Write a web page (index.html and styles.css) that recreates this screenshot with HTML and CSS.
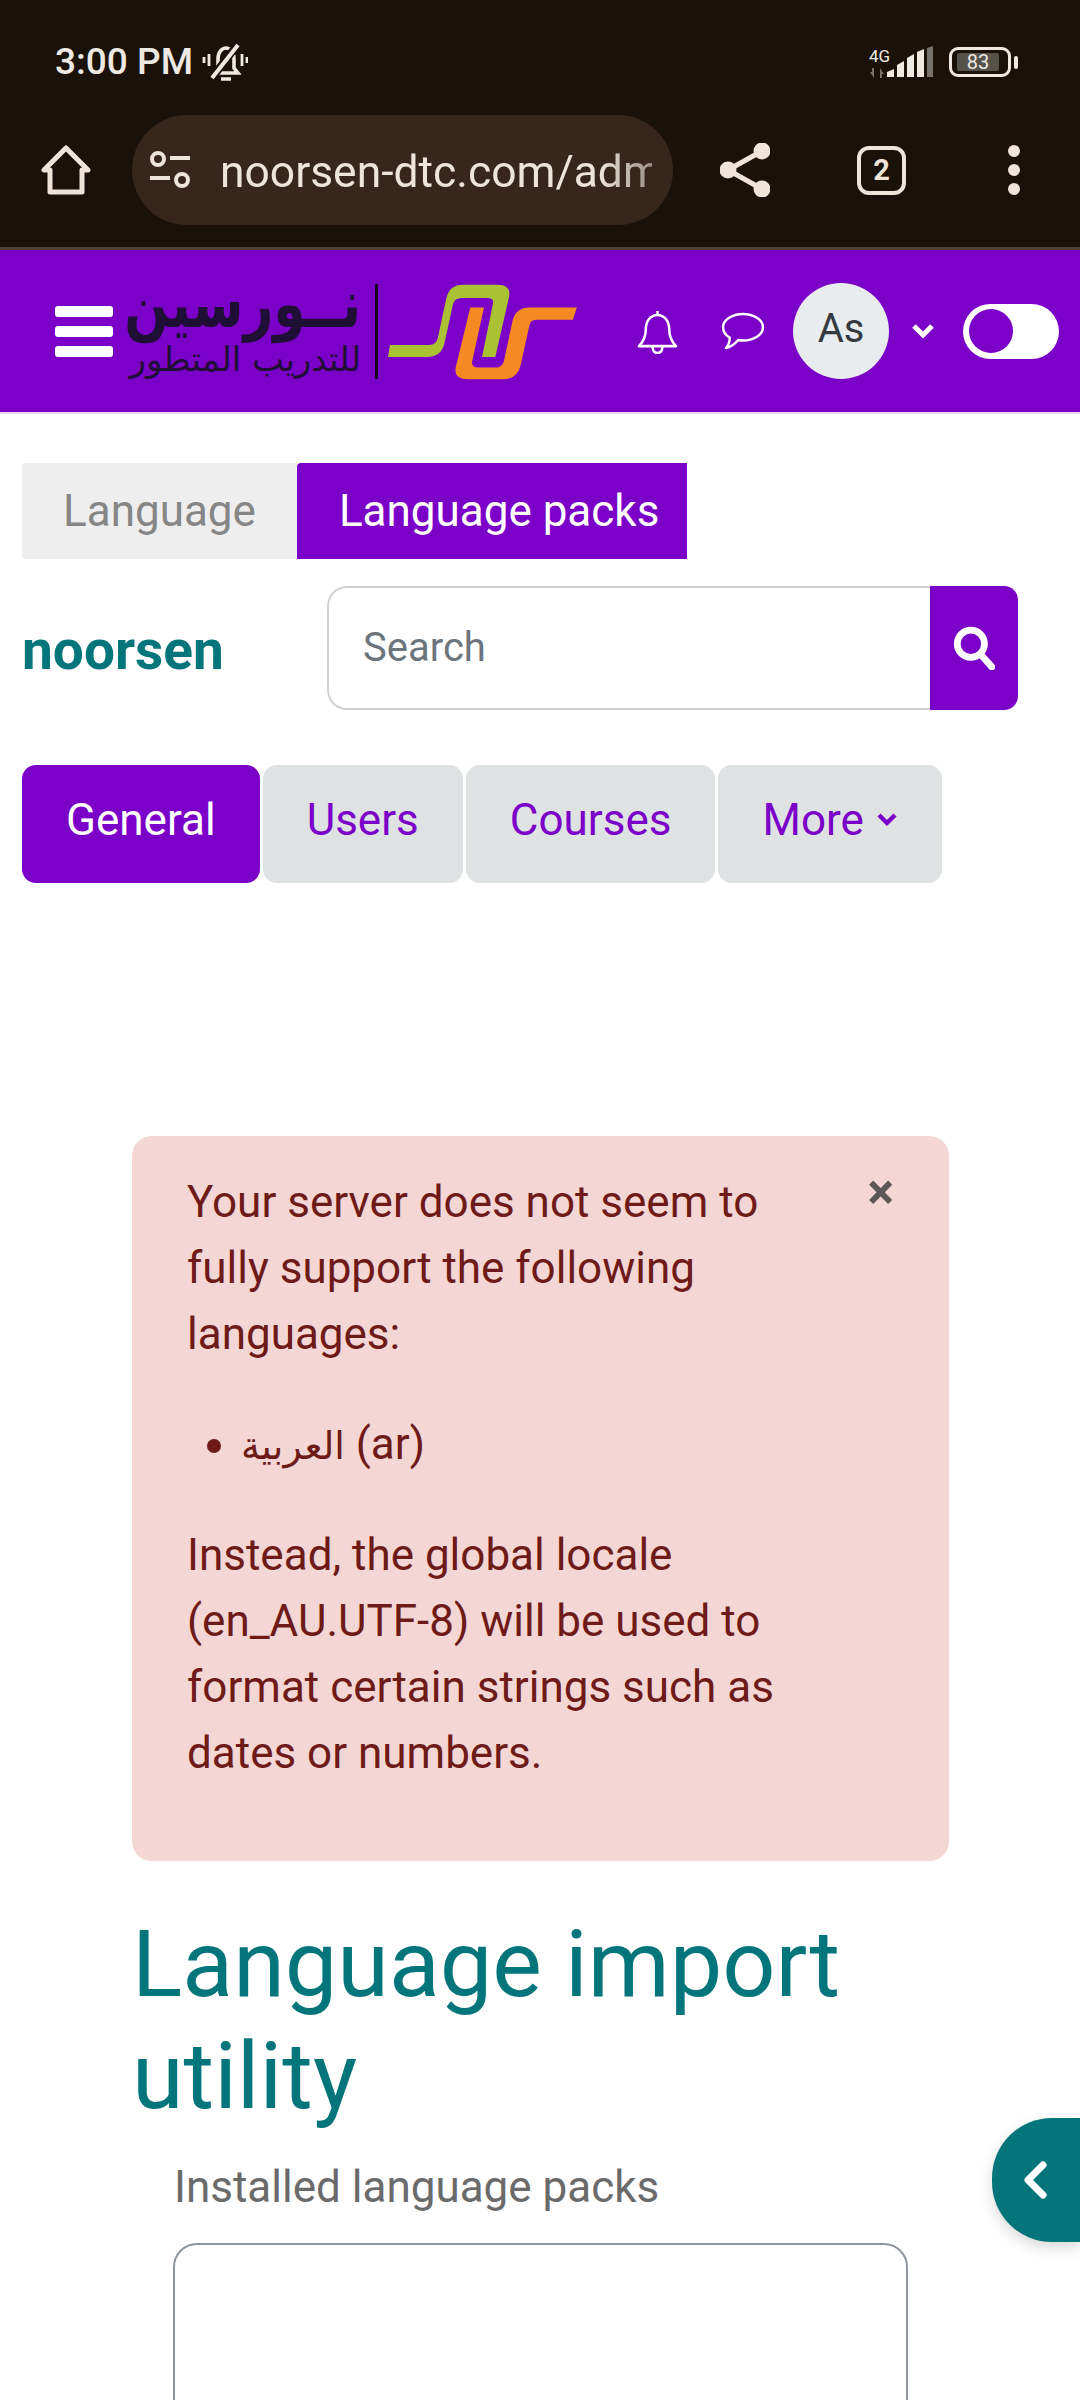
FILE: index.html

```html
<!DOCTYPE html>
<html lang="en">
<head>
  <meta charset="UTF-8">
  <title>Language import utility</title>
  <link rel="stylesheet" href="styles.css">
</head>
<body>
  <div class="browser">
    <div class="status-bar">
      <span class="clock">3:00 PM</span>
      <svg class="mute" viewBox="0 0 46 40" fill="none" stroke="#eee9e2" stroke-width="3.6">
        <path d="M12 31l4-5v-9c0-7 4-11 8-11s8 4 8 11v9l4 5z"/>
        <path d="M19 37h10" stroke-width="3.5"/>
        <path d="M9 37L36 2" stroke="#1a1108" stroke-width="8"/>
        <path d="M10 36L36 3" stroke-width="4"/>
        <path d="M7 12v12M2 15v6M40 12v12M45 15v6" stroke-width="2.8"/>
      </svg>
      <span class="status-right">
        <span class="net">
          <span class="net-label">4G</span>
          <svg class="arrows" viewBox="0 0 16 10" fill="#77726b"><path d="M1 4h2V0h2v10zM11 10V0l4 6h-2v4z"/></svg>
        </span>
        <svg class="signal" viewBox="0 0 48 32" fill="#eee9e2">
          <path d="M0 31v-5l7-3v8zM10 31V19l7-4v16zM20 31V12l7-4v23zM30 31V6l7-3v28z"/>
          <path d="M40 31V2l6-2v31z" fill="#77726b"/>
        </svg>
        <span class="battery"><span class="battery-level">83</span></span>
        <span class="battery-cap"></span>
      </span>
    </div>
    <div class="toolbar">
      <svg class="home" viewBox="0 0 50 50" fill="none" stroke="#eee4d8" stroke-width="5" stroke-linejoin="round">
        <path d="M25 3L3 25h6v22h32V25h6z"/>
      </svg>
      <div class="url-pill">
        <svg class="tune" viewBox="0 0 42 40" fill="none" stroke="#eee4d8" stroke-width="4">
          <circle cx="9" cy="9" r="6"/>
          <circle cx="33" cy="30" r="6"/>
          <path d="M21 8h20M1 28h20"/>
        </svg>
        <span class="url">noorsen-dtc.com/adm</span>
      </div>
      <svg class="share" viewBox="0 0 50 54" fill="#eee4d8" stroke="#eee4d8" stroke-width="5">
        <circle cx="42" cy="8" r="6"/>
        <circle cx="42" cy="46" r="6"/>
        <circle cx="8" cy="27" r="6"/>
        <path d="M42 8L8 27l34 19" fill="none"/>
      </svg>
      <span class="tab-count">2</span>
      <span class="dots"><i></i><i></i><i></i></span>
    </div>
  </div>

  <header class="navbar">
    <span class="burger"><i></i><i></i><i></i></span>
    <div class="logo-text" lang="ar" dir="rtl">
      <span class="logo-name">نــورسين</span>
      <span class="logo-sub">للتدريب المتطور</span>
    </div>
    <span class="logo-rule"></span>
    <svg class="logo-mark" viewBox="980 125 485 290" preserveAspectRatio="none">
      <path fill="#aac134" d="M985 310h100q18 0 22-20l22-120q8-40 42-40h88q36 0 30 36l-35 180h-34l28-160q3-16-14-16h-66q-18 0-22 18l-22 118q-8 40-44 40H980z"/>
      <path fill="#f58a22" d="M1190 198h35l-30 160q-3 20 14 20h46q16 0 21-20l22-120q8-40 44-40h120l-10 37h-92q-16 0-19 16l-22 118q-8 44-46 44h-88q-38 0-32-36z"/>
    </svg>
    <svg class="bell" viewBox="0 0 42 46" fill="none" stroke="#fff" stroke-width="2.6" stroke-linejoin="round">
      <path d="M2 38c4-4 7-9 7-17 0-9 5-15 12-15s12 6 12 15c0 8 3 13 7 17z"/>
      <path d="M21 2v4M16 39c0 8 10 8 10 0"/>
    </svg>
    <svg class="chat" viewBox="0 0 46 40" fill="none" stroke="#fff" stroke-width="2.6" stroke-linejoin="round">
      <path d="M23 2c11 0 21 6 21 14s-10 14-21 14c-2 0-3 0-5-.5C15 33 10 37 5 38c3-3 4-6 4-11C4 24 2 20 2 16 2 8 12 2 23 2z"/>
    </svg>
    <span class="avatar">As</span>
    <svg class="nav-caret" viewBox="0 0 24 18" fill="none" stroke="#fff" stroke-width="5"><path d="M3 4l9 9 9-9"/></svg>
    <span class="toggle"><span class="toggle-knob"></span></span>
  </header>

  <nav class="top-tabs">
    <a class="top-tab">Language</a>
    <a class="top-tab top-tab-active">Language packs</a>
  </nav>

  <div class="site-row">
    <span class="site-name">noorsen</span>
    <form class="search">
      <span class="search-input">Search</span>
      <span class="search-btn">
        <svg viewBox="0 0 40 42" fill="none" stroke="#fff" stroke-width="6.5" stroke-linecap="round">
          <circle cx="17" cy="17" r="13"/>
          <path d="M27 28l10 11"/>
        </svg>
      </span>
    </form>
  </div>

  <nav class="pills">
    <a class="pill pill-active">General</a>
    <a class="pill">Users</a>
    <a class="pill">Courses</a>
    <a class="pill">More
      <svg class="more-caret" viewBox="0 0 20 16" fill="none" stroke="#7b00c8" stroke-width="4.4"><path d="M2 3l8 8 8-8"/></svg>
    </a>
  </nav>

  <main class="content">
    <div class="alert">
      <span class="alert-close">×</span>
      <p>Your server does not seem to fully support the following languages:</p>
      <ul>
        <li><span lang="ar" class="ar">العربية</span> (ar)</li>
      </ul>
      <p>Instead, the global locale (en_AU.UTF-8) will be used to format certain strings such as dates or numbers.</p>
    </div>
    <h1>Language import utility</h1>
    <label class="packs-label">Installed language packs</label>
    <div class="packs-box"></div>
  </main>

  <a class="drawer-btn">
    <svg viewBox="0 0 26 38" fill="none" stroke="#fff" stroke-width="7" stroke-linejoin="round" stroke-linecap="round"><path d="M21 4L6 19l15 15"/></svg>
  </a>
</body>
</html>
```

FILE: styles.css

```css
html, body {
  margin: 0;
  padding: 0;
}

body {
  position: relative;
  width: 1080px;
  height: 2400px;
  overflow: hidden;
  background-color: white;
  font-family: Roboto, "Liberation Sans", sans-serif;
}

/* browser chrome */
.browser {
  height: 247px;
  background-color: #1a1108;
  border-bottom: 3px solid #4a4336;
}

.status-bar {
  display: flex;
  align-items: center;
  height: 60px;
  padding: 32px 62px 0 55px;
  color: #eee9e2;
}

.clock {
  font-size: 37px;
  font-weight: 500;
  line-height: 60px;
}

.mute {
  width: 46px;
  height: 40px;
  margin-left: 9px;
}

.status-right {
  display: flex;
  align-items: center;
  margin-left: auto;
}

.net {
  display: flex;
  flex-direction: column;
  width: 30px;
  margin-right: -12px;
}

.net-label {
  font-size: 17px;
  line-height: 20px;
}

.arrows {
  width: 16px;
  height: 10px;
  margin-top: 2px;
}

.signal {
  width: 48px;
  height: 32px;
}

.battery {
  display: flex;
  align-items: center;
  box-sizing: border-box;
  width: 62px;
  height: 30px;
  margin-left: 14px;
  padding: 4px;
  border: 3px solid #eee9e2;
  border-radius: 9px;
}

.battery-level {
  width: 42px;
  height: 18px;
  margin-left: 1px;
  background-color: #55514b;
  border-radius: 2px;
  color: #eee9e2;
  font-size: 20px;
  line-height: 18px;
  text-align: center;
}

.battery-cap {
  width: 4px;
  height: 13px;
  margin-left: 3px;
  background-color: #eee9e2;
  border-radius: 2px;
}

.toolbar {
  display: flex;
  align-items: center;
  height: 110px;
  margin-top: 23px;
  padding-left: 41px;
}

.home {
  width: 50px;
  height: 50px;
}

.url-pill {
  display: flex;
  align-items: center;
  box-sizing: border-box;
  width: 541px;
  height: 110px;
  margin-left: 41px;
  padding-left: 17px;
  background-color: #38261a;
  border-radius: 55px;
}

.tune {
  flex: none;
  width: 42px;
  height: 40px;
}

.url {
  display: block;
  width: 432px;
  margin-left: 29px;
  padding-top: 3px;
  overflow: hidden;
  color: #eee4d8;
  font-size: 44.4px;
  white-space: nowrap;
  -webkit-mask-image: linear-gradient(to right, black 88%, rgba(0, 0, 0, 0.55));
  mask-image: linear-gradient(to right, black 88%, rgba(0, 0, 0, 0.55));
}

.share {
  width: 50px;
  height: 54px;
  margin-left: 47px;
}

.tab-count {
  box-sizing: border-box;
  width: 49px;
  height: 49px;
  margin-left: 87px;
  border: 4px solid #eee4d8;
  border-radius: 12px;
  color: #eee4d8;
  font-size: 29px;
  font-weight: 700;
  line-height: 41px;
  text-align: center;
}

.dots {
  display: flex;
  flex-direction: column;
  gap: 7px;
  margin-left: 102px;
}

.dots i {
  display: block;
  width: 12px;
  height: 12px;
  background-color: #eee4d8;
  border-radius: 50%;
}

/* purple site header */
.navbar {
  display: flex;
  align-items: center;
  box-sizing: border-box;
  height: 164px;
  padding: 0 21px 0 55px;
  background-color: #7b00c8;
  border-bottom: 2px solid #ecd5f8;
}

.burger {
  display: flex;
  flex: none;
  flex-direction: column;
  gap: 9px;
  width: 58px;
}

.burger i {
  display: block;
  height: 11px;
  background-color: white;
  border-radius: 3px;
}

.logo-text {
  display: flex;
  flex: none;
  flex-direction: column;
  align-items: flex-start;
  width: 239px;
  margin-left: 9px;
  color: #1f0f36;
  font-family: "DejaVu Sans", sans-serif;
  white-space: nowrap;
}

.logo-name {
  font-size: 52px;
  font-weight: 700;
  line-height: 54px;
  transform: scaleY(1.28);
  transform-origin: center bottom;
}

.logo-sub {
  margin-top: 2px;
  font-size: 34px;
  line-height: 37px;
}

.logo-rule {
  flex: none;
  width: 3px;
  height: 95px;
  margin-left: 14px;
  background-color: #14081f;
}

.logo-mark {
  flex: none;
  width: 190px;
  height: 97px;
  margin-left: 10px;
}

.bell {
  flex: none;
  width: 41px;
  height: 45px;
  margin-left: 59px;
}

.chat {
  flex: none;
  width: 44px;
  height: 38px;
  margin-left: 43px;
}

.avatar {
  flex: none;
  width: 96px;
  height: 96px;
  margin-left: 28px;
  background-color: #e9ecef;
  border-radius: 50%;
  color: #343a40;
  font-size: 40px;
  line-height: 92px;
  text-align: center;
}

.nav-caret {
  flex: none;
  width: 24px;
  height: 18px;
  margin-left: 22px;
}

.toggle {
  display: flex;
  flex: none;
  align-items: center;
  box-sizing: border-box;
  width: 96px;
  height: 55px;
  margin-left: 28px;
  padding-left: 6px;
  background-color: white;
  border-radius: 28px;
}

.toggle-knob {
  width: 44px;
  height: 44px;
  background-color: #7b00c8;
  border-radius: 50%;
}

/* tabs and search */
.top-tabs {
  display: flex;
  margin: 49px 0 0 22px;
}

.top-tab {
  padding: 0 41px 0 41px;
  background-color: #eeeeee;
  border-radius: 4px 0 0 4px;
  color: #868686;
  font-size: 44px;
  line-height: 96px;
}

.top-tab-active {
  padding: 0 28px 0 42px;
  background-color: #7b00c8;
  border-radius: 4px 0 0 0;
  color: white;
}

.site-row {
  display: flex;
  align-items: center;
  margin: 27px 0 0 22px;
}

.site-name {
  width: 305px;
  padding-top: 4px;
  color: #04757a;
  font-size: 55px;
  font-weight: 700;
}

.search {
  display: flex;
  width: 691px;
  height: 124px;
  margin: 0;
}

.search-input {
  flex: 1;
  box-sizing: border-box;
  padding-left: 34px;
  border: 2px solid #d0d0d0;
  border-right: none;
  border-radius: 20px 0 0 20px;
  color: #6c757d;
  font-size: 40px;
  line-height: 120px;
}

.search-btn {
  display: flex;
  align-items: center;
  justify-content: center;
  width: 88px;
  background-color: #7b00c8;
  border-radius: 0 14px 14px 0;
}

.search-btn svg {
  width: 42px;
  height: 44px;
}

.pills {
  display: flex;
  gap: 3px;
  margin: 55px 0 0 22px;
}

.pill {
  display: flex;
  align-items: center;
  gap: 12px;
  box-sizing: border-box;
  height: 118px;
  padding: 0 44px 8px;
  background-color: #dee2e3;
  border-radius: 14px;
  color: #7b00c8;
  font-size: 44px;
}

.pill-active {
  background-color: #7b00c8;
  color: white;
}

.more-caret {
  width: 22px;
  height: 16px;
}

/* main content */
.content {
  width: 817px;
  margin: 253px 0 0 132px;
}

.alert {
  position: relative;
  box-sizing: border-box;
  height: 725px;
  padding: 33px 130px 0 55px;
  background-color: #f4d6d4;
  border-radius: 20px;
  color: #6e1a18;
  font-size: 44px;
  line-height: 66px;
}

.alert p {
  margin: 0;
}

.alert ul {
  margin: 44px 0 43px;
  padding-left: 54px;
}

.ar {
  font-family: "DejaVu Sans", sans-serif;
  font-size: 38px;
}

.alert-close {
  position: absolute;
  top: 23px;
  right: 55px;
  color: #5f5757;
  font-size: 50px;
  font-weight: 700;
  line-height: 66px;
}

h1 {
  margin: 47px 0 0 0;
  color: #04757a;
  font-size: 93.5px;
  font-weight: 400;
  line-height: 112px;
}

.packs-label {
  display: block;
  margin: 26px 0 0 42px;
  color: #6a6a6a;
  font-size: 44px;
  line-height: 58px;
}

.packs-box {
  box-sizing: border-box;
  width: 735px;
  height: 300px;
  margin: 27px 0 0 41px;
  border: 2px solid #8f959e;
  border-radius: 24px;
}

.drawer-btn {
  position: absolute;
  top: 2118px;
  right: 0;
  display: flex;
  align-items: center;
  box-sizing: border-box;
  width: 88px;
  height: 124px;
  padding-left: 30px;
  background-color: #04757a;
  border-radius: 60px 0 0 60px;
  box-shadow: 0 6px 14px rgba(0, 0, 0, 0.15);
}

.drawer-btn svg {
  width: 26px;
  height: 38px;
}
```
